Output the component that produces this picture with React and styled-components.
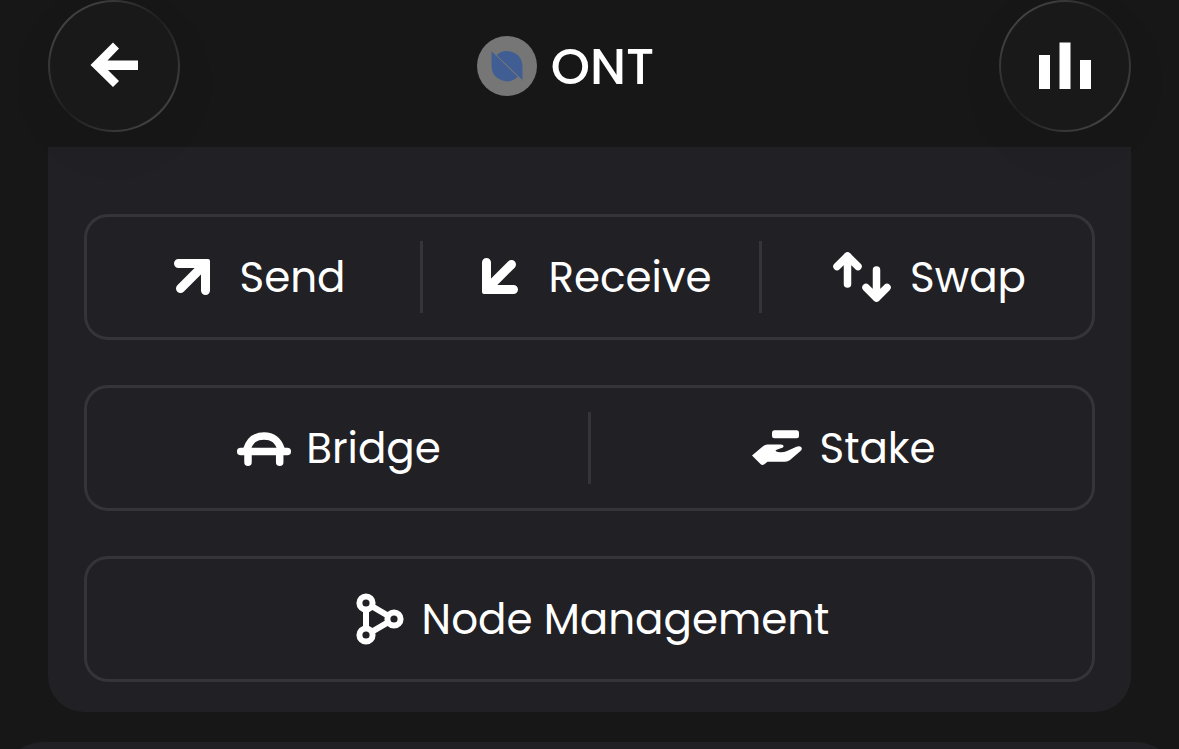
import React from 'react';
import styled, { createGlobalStyle } from 'styled-components';

const GlobalStyle = createGlobalStyle`
  * {
    box-sizing: border-box;
  }

  body {
    margin: 0;
    background-color: #171717;
    color: #fff;
    font-family: Poppins, Inter, sans-serif;
  }
`;

const Page = styled.div`
  display: flex;
  flex-direction: column;
  height: 100vh;
  overflow: hidden;
`;

const Header = styled.header`
  display: flex;
  justify-content: space-between;
  align-items: center;
  padding: 0 48px 15px;
  position: relative;
  z-index: 1;
`;

const RoundButton = styled.button`
  display: flex;
  align-items: center;
  justify-content: center;
  width: 132px;
  height: 132px;
  padding: 0;
  border: 2px solid transparent;
  border-radius: 50%;
  background:
    linear-gradient(#191919, #191919) padding-box,
    linear-gradient(135deg, #464648 10%, #1e1e1e 50%, #464648 90%) border-box;
  box-shadow: 0 16px 48px rgba(0, 0, 0, 0.06);
  color: inherit;
  cursor: pointer;
`;

const Token = styled.div`
  display: flex;
  align-items: center;
  gap: 14px;
  padding-right: 48px;
`;

const TokenName = styled.h1`
  margin: 0;
  padding-top: 2px;
  font-size: 50px;
  font-weight: 500;
  line-height: 60px;
`;

const Card = styled.main`
  display: flex;
  flex-direction: column;
  gap: 45px;
  margin: 0 48px 30px;
  padding: 67px 36px 30px;
  border-radius: 0 0 36px 36px;
  background-color: #212025;
`;

const ActionRow = styled.div`
  display: grid;
  grid-template-columns: ${(props) => props.$columns};
  align-items: center;
  border: 3px solid #353438;
  border-radius: 24px;
`;

const Action = styled.button`
  display: flex;
  align-items: center;
  justify-content: center;
  gap: ${(props) => (props.$wide ? '18px' : '12px')};
  height: 120px;
  padding: 0;
  border: none;
  background: none;
  color: inherit;
  font-family: inherit;
  font-size: 42px;
  line-height: 60px;
  white-space: nowrap;
  cursor: pointer;
`;

const Label = styled.span`
  padding-top: 2px;
`;

const Divider = styled.span`
  width: 3px;
  height: 72px;
  background-color: #353438;
`;

const NextCard = styled.section`
  flex: none;
  height: 120px;
  border-radius: 44px 44px 0 0;
  background-color: #212025;
`;

const Icon = styled.svg`
  flex: none;
  display: block;
  fill: none;
  stroke: #fff;
  stroke-linecap: round;
`;

const Solid = styled.svg`
  flex: none;
  display: block;
  fill: #fff;
`;

const BackIcon = () => (
  <Solid width="48" height="48" viewBox="0 0 48 48">
    <path d="M.5 23 23 .5 29 6.5 17.5 18.5H48V28H18L29 39 23 45Z" />
  </Solid>
);

const ChartIcon = () => (
  <Solid width="54" height="48" viewBox="0 0 54 48">
    <path d="M1 13h11v34H1zM21.5 .5h11V47h-11zM42 18h11v29H42z" />
  </Solid>
);

const OntLogo = () => (
  <Solid width="60" height="60" viewBox="0 0 60 60">
    <circle cx="30" cy="30" r="30" fill="#767676" />
    <path
      d="M19.6 19.2A15.5 15.5 0 0 1 45.5 30V44.4ZM14.5 15V30A15.5 15.5 0 0 0 40.8 40.8Z"
      fill="#405e94"
    />
    <path d="M14.5 14.8 45.5 44.6" stroke="#767676" strokeWidth="1" />
  </Solid>
);

const SendIcon = () => (
  <Icon width="60" height="60" viewBox="0 0 60 60" strokeWidth="9">
    <path d="M16.5 16.5H41M43.5 19V43.5M18.5 41.5 41 19" />
    <path d="M41 14H46V19L43 22 38 17Z" fill="#fff" strokeWidth="4" strokeLinejoin="round" />
  </Icon>
);

const ReceiveIcon = () => (
  <Icon width="60" height="60" viewBox="0 0 60 60" strokeWidth="9">
    <path d="M16.5 15.5V40M19 42.5H43.5M41.5 17.5 19 40" />
    <path d="M14 40V45H19L22 42 17 37Z" fill="#fff" strokeWidth="4" strokeLinejoin="round" />
  </Icon>
);

const SwapIcon = () => (
  <Icon width="64" height="60" viewBox="-4 0 64 60" strokeWidth="7.5" strokeLinejoin="round">
    <path d="M15.5 37V9M5 19.5 15.5 9 26 19.5M44.5 23V51M34 40.5 44.5 51 55 40.5" />
  </Icon>
);

const BridgeIcon = () => (
  <Icon width="60" height="60" viewBox="0 0 60 60" strokeWidth="7.5">
    <path d="M6.7 33.5H53.3M14 34V44.3M45.7 34V44.3" />
    <path d="M13 31C16 22 21 18 30 18S44 22 47 31" />
  </Icon>
);

const StakeIcon = () => (
  <Solid width="60" height="60" viewBox="0 0 60 60">
    <rect x="25" y="12.3" width="27" height="8" rx="2.5" />
    <path d="M5 37.5 16 28.2Q18 26.6 20.5 26.6H34Q36.8 26.6 36.6 28.4 36.3 30 33 30.6L28.5 32.2Q29 34 33 34.2 37 34.4 40 33L49.5 28.7Q53 27.6 54.5 29.6 55.4 31.4 53.5 33L43 42Q41 43.7 38 43.7H20.5L17 46.5Q15 47.6 13.5 46Z" />
  </Solid>
);

const NodeIcon = () => (
  <Icon width="60" height="60" viewBox="0 0 60 60" strokeWidth="6">
    <circle cx="16" cy="14" r="6.6" />
    <circle cx="44" cy="30" r="6.6" />
    <circle cx="16" cy="46" r="6.6" />
    <path d="M16 21.5V38.5M22.5 17.7 37.5 26.3M22.5 42.3 37.5 33.7" />
  </Icon>
);

const App = () => {
  return (
    <>
      <GlobalStyle />
      <Page>
        <Header>
          <RoundButton type="button" aria-label="Back">
            <BackIcon />
          </RoundButton>
          <Token>
            <OntLogo />
            <TokenName>ONT</TokenName>
          </Token>
          <RoundButton type="button" aria-label="Chart">
            <ChartIcon />
          </RoundButton>
        </Header>
        <Card>
          <ActionRow $columns="111fr auto 112fr auto 110fr">
            <Action type="button" $wide>
              <SendIcon />
              <Label>Send</Label>
            </Action>
            <Divider />
            <Action type="button" $wide>
              <ReceiveIcon />
              <Label>Receive</Label>
            </Action>
            <Divider />
            <Action type="button" $wide>
              <SwapIcon />
              <Label>Swap</Label>
            </Action>
          </ActionRow>
          <ActionRow $columns="1fr auto 1fr">
            <Action type="button">
              <BridgeIcon />
              <Label>Bridge</Label>
            </Action>
            <Divider />
            <Action type="button">
              <StakeIcon />
              <Label>Stake</Label>
            </Action>
          </ActionRow>
          <ActionRow $columns="1fr">
            <Action type="button">
              <NodeIcon />
              <Label>Node Management</Label>
            </Action>
          </ActionRow>
        </Card>
        <NextCard />
      </Page>
    </>
  );
};

export default App;
